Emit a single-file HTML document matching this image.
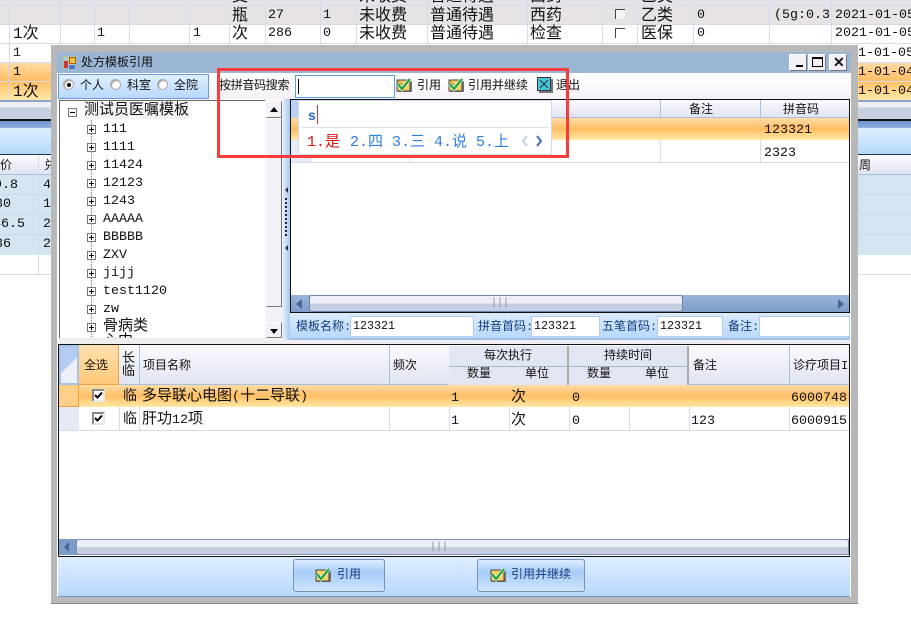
<!DOCTYPE html>
<html><head><meta charset="utf-8">
<style>
*{box-sizing:border-box}
html,body{margin:0;padding:0;width:911px;height:621px;overflow:hidden;background:#fff}
body{position:relative;font-family:"Liberation Mono","WenQuanYi Zen Hei","Noto Sans CJK SC",monospace;font-size:13.33px;color:#111}
div,span.a{position:absolute}
.t{position:absolute;white-space:nowrap;line-height:16px}
.s{font-size:12px}
.f{font-size:16px}
.m{font-size:15px}
.vl{position:absolute;width:1px;background:#d5daee}
.hl{position:absolute;height:1px;background:#d5daee}
.org{background:linear-gradient(#ffdca8,#ffbe62 50%,#ffe9a8)}
.hdr{background:linear-gradient(#fbfbfe,#e1e4f2)}
.exp{position:absolute;width:9px;height:9px;border:1px solid #777;background:#fff}
.exp:before{content:"";position:absolute;left:1px;top:3px;width:5px;height:1px;background:#000}
.exp.p:after{content:"";position:absolute;left:3px;top:1px;width:1px;height:5px;background:#000}
.cb{position:absolute;width:13px;height:13px;border:2px solid #888;border-right-color:#e8e8e8;border-bottom-color:#e8e8e8;background:#fff}
.btn3d{position:absolute;background:#f4f1f6;border:1px solid;border-color:#fff #777 #777 #fff}
.rad{position:absolute;width:11px;height:11px;border-radius:50%;background:#fff;border:1px solid #aaa;box-shadow:inset 1px 1px 1px #999}
.lb{color:#143c7c}
.in{font:11.67px/16px "Liberation Mono",monospace}
</style></head><body>

<!-- background table -->
<div style="left:0;top:0;width:911px;height:24px;background:#e6e2e6"></div>
<div class="org" style="left:0;top:62px;width:911px;height:38px"></div>
<div style="left:0;top:100px;width:911px;height:2px;background:#8fa4c8"></div>
<div style="left:0;top:102px;width:911px;height:17px;background:linear-gradient(#eeeef6 30%,#c4cede 35%,#c8d2e2)"></div>
<div style="left:0;top:119px;width:911px;height:2px;background:#111"></div>
<div style="left:0;top:121px;width:911px;height:7px;background:linear-gradient(#6d93d0,#8fb0e0)"></div>
<div style="left:0;top:128px;width:911px;height:26px;background:linear-gradient(#dfefff,#b6d8fb)"></div>
<div style="left:0;top:154px;width:911px;height:21px;background:linear-gradient(#fcfcff,#e0e3f1);border-top:1px solid #234;border-bottom:1px solid #a8c0dc"></div>
<div style="left:0;top:175px;width:911px;height:80px;background:#d3e5f1"></div>
<div class="hl" style="left:0;top:274px;width:911px"></div>
<div class="hl" style="left:0;top:194px;width:911px;background:#c8dbea"></div>
<div class="hl" style="left:0;top:214px;width:911px;background:#c8dbea"></div>
<div class="hl" style="left:0;top:234px;width:911px;background:#c8dbea"></div>
<div class="hl" style="left:0;top:5px;width:911px"></div>
<div class="hl" style="left:0;top:24px;width:911px"></div>
<div class="hl" style="left:0;top:43px;width:911px"></div>
<div class="hl" style="left:0;top:62px;width:911px"></div>
<div class="hl" style="left:0;top:81px;width:911px"></div>
<div class="vl" style="left:9px;top:0;height:100px"></div>
<div class="vl" style="left:60px;top:0;height:44px"></div>
<div class="vl" style="left:94px;top:0;height:44px"></div>
<div class="vl" style="left:129px;top:0;height:44px"></div>
<div class="vl" style="left:189px;top:0;height:44px"></div>
<div class="vl" style="left:229px;top:0;height:44px"></div>
<div class="vl" style="left:265px;top:0;height:44px"></div>
<div class="vl" style="left:320px;top:0;height:44px"></div>
<div class="vl" style="left:356px;top:0;height:44px"></div>
<div class="vl" style="left:427px;top:0;height:44px"></div>
<div class="vl" style="left:527px;top:0;height:44px"></div>
<div class="vl" style="left:602px;top:0;height:44px"></div>
<div class="vl" style="left:637px;top:0;height:44px"></div>
<div class="vl" style="left:693px;top:0;height:44px"></div>
<div class="vl" style="left:769px;top:0;height:44px"></div>
<div class="vl" style="left:831px;top:0;height:44px"></div>
<div class="vl" style="left:38px;top:155px;height:120px"></div>

<!-- clipped top row -->
<span class="t f" style="left:232px;top:-11px">支</span>
<span class="t" style="left:268px;top:-11px">2.544</span>
<span class="t" style="left:323px;top:-11px">1</span>
<span class="t f" style="left:359px;top:-11px">未收费</span>
<span class="t f" style="left:430px;top:-11px">普通待遇</span>
<span class="t f" style="left:530px;top:-11px">西药</span>
<span class="t f" style="left:641px;top:-11px">乙类</span>
<span class="t" style="left:697px;top:-11px">1</span>
<span class="t" style="left:774px;top:-11px">24:2.4:1</span>
<span class="t" style="left:835px;top:-11px">2021-01-05</span>

<span class="t f" style="left:232px;top:8px">瓶</span>
<span class="t" style="left:268px;top:8px">27</span>
<span class="t" style="left:323px;top:8px">1</span>
<span class="t f" style="left:359px;top:8px">未收费</span>
<span class="t f" style="left:430px;top:8px">普通待遇</span>
<span class="t f" style="left:530px;top:8px">西药</span>
<span class="t f" style="left:641px;top:8px">乙类</span>
<span class="t" style="left:697px;top:8px">0</span>
<span class="t" style="left:774px;top:8px;width:58px;overflow:hidden">(5g:0.3;</span>
<span class="t" style="left:835px;top:8px">2021-01-05</span>
<div style="left:615px;top:9px;width:10px;height:10px;border-left:1px solid #444;border-top:1px solid #444;background:#f6f4f6"></div>

<span class="t f" style="left:13px;top:26px">1次</span>
<span class="t" style="left:97px;top:26px">1</span>
<span class="t" style="left:193px;top:26px">1</span>
<span class="t f" style="left:232px;top:26px">次</span>
<span class="t" style="left:268px;top:26px">286</span>
<span class="t" style="left:323px;top:26px">0</span>
<span class="t f" style="left:359px;top:26px">未收费</span>
<span class="t f" style="left:430px;top:26px">普通待遇</span>
<span class="t f" style="left:530px;top:26px">检查</span>
<span class="t f" style="left:641px;top:26px">医保</span>
<span class="t" style="left:697px;top:26px">0</span>
<span class="t" style="left:835px;top:26px">2021-01-05</span>
<div style="left:615px;top:28px;width:10px;height:10px;border-left:1px solid #444;border-top:1px solid #444"></div>

<span class="t" style="left:13px;top:46px">1</span>
<span class="t" style="left:13px;top:65px">1</span>
<span class="t f" style="left:13px;top:84px">1次</span>
<span class="t s" style="left:0;top:158px">价</span>
<span class="t s" style="left:44px;top:158px">兑</span>
<span class="t" style="left:-6px;top:178px">9.8</span>
<span class="t" style="left:43px;top:178px">4</span>
<span class="t" style="left:-5px;top:197px">30</span>
<span class="t" style="left:43px;top:197px">1</span>
<span class="t" style="left:-7px;top:217px">46.5</span>
<span class="t" style="left:43px;top:217px">2</span>
<span class="t" style="left:-5px;top:237px">36</span>
<span class="t" style="left:43px;top:237px">2</span>
<span class="t s" style="left:859px;top:158px">周</span>
<span class="t" style="left:858px;top:46px">1-01-05</span>
<span class="t" style="left:858px;top:65px">1-01-04</span>
<span class="t" style="left:858px;top:84px">1-01-04</span>

<!-- window -->
<div style="left:51px;top:45px;width:807px;height:559px;background:#b8b8b8;border-bottom:1px solid #888"></div>
<div style="left:57px;top:52px;width:794px;height:545px;background:#fff"></div>
<div style="left:57px;top:52px;width:794px;height:21px;background:#9ab6d4"></div>
<div style="left:63px;top:56px;width:13px;height:13px;border:1px dotted #ab8;background:#b8c8c8"></div>
<div style="left:69px;top:57px;width:7px;height:7px;background:#f2c23c;border:1px solid #a60"></div>
<div style="left:64px;top:61px;width:4px;height:7px;background:#c33"></div>
<div style="left:69px;top:65px;width:6px;height:4px;background:#4a78d0"></div>
<span class="t s" style="left:81px;top:55px;color:#111">处方模板引用</span>
<div class="btn3d" style="left:789px;top:54px;width:18px;height:17px"><div style="left:6px;top:10px;width:7px;height:2px;background:#000"></div></div>
<div class="btn3d" style="left:808px;top:54px;width:18px;height:17px"><div style="left:3px;top:2px;width:11px;height:10px;border:1px solid #000;border-top-width:2px"></div></div>
<div class="btn3d" style="left:829px;top:54px;width:18px;height:17px"><span class="t" style="left:3px;top:0;font:bold 14px/15px 'Liberation Sans',sans-serif">✕</span></div>

<!-- toolbar -->
<div style="left:57px;top:73px;width:793px;height:26px;background:linear-gradient(#fff,#f5f1f8)"></div>
<div style="left:58px;top:74px;width:151px;height:25px;background:linear-gradient(#e0eeff,#b8d8fc);border:1px solid #6a9ad8"></div>
<div class="rad" style="left:63px;top:79px"><div style="left:3px;top:3px;width:4px;height:4px;border-radius:50%;background:#000"></div></div>
<span class="t s" style="left:80px;top:78px">个人</span>
<div class="rad" style="left:110px;top:79px"></div>
<span class="t s" style="left:127px;top:78px">科室</span>
<div class="rad" style="left:157px;top:79px"></div>
<span class="t s" style="left:174px;top:78px">全院</span>
<span class="t s" style="left:219px;top:78px;letter-spacing:-.3px">按拼音码搜索</span>
<div style="left:295px;top:75px;width:100px;height:23px;background:#fff;border:1px solid #5a9ede"></div>
<div style="left:298px;top:79px;width:1px;height:15px;background:#000"></div>

<svg style="position:absolute;left:396px;top:77px" width="17" height="16" viewBox="0 0 17 16"><rect x="2" y="4" width="14" height="11" rx="1" fill="#777"/><rect x="1" y="3" width="13" height="11" fill="#f6cf5c" stroke="#444"/><path d="M2 4l6 5 6-5" fill="none" stroke="#b88a20"/><path d="M2 7l4 5 8-10" fill="none" stroke="#fff" stroke-width="3.6"/><path d="M2 7l4 5 8-10" fill="none" stroke="#27a53f" stroke-width="2.4"/></svg>
<span class="t s" style="left:417px;top:78px">引用</span>
<svg style="position:absolute;left:448px;top:77px" width="17" height="16" viewBox="0 0 17 16"><rect x="2" y="4" width="14" height="11" rx="1" fill="#777"/><rect x="1" y="3" width="13" height="11" fill="#f6cf5c" stroke="#444"/><path d="M2 4l6 5 6-5" fill="none" stroke="#b88a20"/><path d="M2 7l4 5 8-10" fill="none" stroke="#fff" stroke-width="3.6"/><path d="M2 7l4 5 8-10" fill="none" stroke="#27a53f" stroke-width="2.4"/></svg>
<span class="t s" style="left:468px;top:78px">引用并继续</span>
<svg style="position:absolute;left:537px;top:77px" width="16" height="16" viewBox="0 0 16 16"><rect x="2" y="2" width="14" height="14" fill="#777"/><rect x=".5" y=".5" width="13" height="13" fill="#48c8d0" stroke="#334"/><path d="M3 3l8 8M11 3l-8 8" stroke="#235" stroke-width="1.1"/></svg>
<span class="t s" style="left:556px;top:78px">退出</span>

<!-- tree -->
<div style="left:59px;top:100px;width:224px;height:240px;background:#fff;border:1px solid #666;border-right:none;border-bottom:none;overflow:hidden">
  <div style="left:31px;top:10px;width:0;height:240px;border-left:1px dotted #777"></div>
  <div class="exp" style="left:8px;top:7px"></div>
  <span class="t m" style="left:24px;top:2px;background:#f6f1f6">测试员医嘱模板</span>
  <div class="exp p" style="left:27px;top:24px"></div><span class="t" style="left:43px;top:21px">111</span>
  <div class="exp p" style="left:27px;top:42px"></div><span class="t" style="left:43px;top:39px">1111</span>
  <div class="exp p" style="left:27px;top:60px"></div><span class="t" style="left:43px;top:57px">11424</span>
  <div class="exp p" style="left:27px;top:78px"></div><span class="t" style="left:43px;top:75px">12123</span>
  <div class="exp p" style="left:27px;top:96px"></div><span class="t" style="left:43px;top:93px">1243</span>
  <div class="exp p" style="left:27px;top:114px"></div><span class="t" style="left:43px;top:111px">AAAAA</span>
  <div class="exp p" style="left:27px;top:132px"></div><span class="t" style="left:43px;top:129px">BBBBB</span>
  <div class="exp p" style="left:27px;top:150px"></div><span class="t" style="left:43px;top:147px">ZXV</span>
  <div class="exp p" style="left:27px;top:168px"></div><span class="t" style="left:43px;top:165px">jijj</span>
  <div class="exp p" style="left:27px;top:186px"></div><span class="t" style="left:43px;top:183px">test1120</span>
  <div class="exp p" style="left:27px;top:204px"></div><span class="t" style="left:43px;top:201px">zw</span>
  <div class="exp p" style="left:27px;top:222px"></div><span class="t m" style="left:43px;top:218px">骨病类</span>
  <span class="t m" style="left:43px;top:233px">心内</span>
</div>
<div style="left:59px;top:338px;width:224px;height:2px;background:#eeecf0"></div>
<div style="left:265px;top:100px;width:18px;height:240px;background:#f4f1f6"></div>
<div class="btn3d" style="left:266px;top:101px;width:16px;height:17px"><div style="left:3px;top:5px;border:4px solid transparent;border-bottom:5px solid #000;border-top:none"></div></div>
<div class="btn3d" style="left:266px;top:118px;width:16px;height:189px"></div>
<div class="btn3d" style="left:266px;top:322px;width:16px;height:16px"><div style="left:3px;top:6px;border:4px solid transparent;border-top:5px solid #000;border-bottom:none"></div></div>

<!-- splitter -->
<div style="left:283px;top:99px;width:7px;height:241px;background:linear-gradient(90deg,#e0eeff,#a8c8f0)"></div>
<div style="left:285px;top:198px;width:2px;height:38px;border-left:2px dotted #223"></div>
<div style="left:285px;top:187px;border:3px solid transparent;border-right:3px solid #234;border-left:none"></div>
<div style="left:285px;top:245px;border:3px solid transparent;border-right:3px solid #234;border-left:none"></div>

<!-- right grid -->
<div style="left:290px;top:99px;width:560px;height:214px;background:#fff;border:1px solid #111;overflow:hidden">
  <div class="hdr" style="left:0;top:0;width:560px;height:18px;border-bottom:1px solid #a8c0dc"></div>
  <div style="left:0;top:0;width:16px;height:18px;background:#b8cff0"></div>
  <div class="org" style="left:0;top:18px;width:560px;height:22px"></div>
  <div style="left:0;top:40px;width:20px;height:23px;background:#e6e9f6;border-right:1px solid #d5daee"></div>
  <div class="hl" style="left:0;top:62px;width:560px"></div>
  <div class="vl" style="left:369px;top:0;height:18px;background:#a8c0dc"></div>
  <div class="vl" style="left:469px;top:0;height:18px;background:#a8c0dc"></div>
  <div class="vl" style="left:119px;top:40px;height:23px"></div>
  <div class="vl" style="left:369px;top:40px;height:23px"></div>
  <div class="vl" style="left:469px;top:40px;height:23px"></div>
  <span class="t s" style="left:398px;top:2px">备注</span>
  <span class="t s" style="left:492px;top:2px">拼音码</span>
  <span class="t" style="left:473px;top:23px">123321</span>
  <span class="t" style="left:473px;top:46px">2323</span>
  <div style="left:0;top:195px;width:558px;height:17px;background:linear-gradient(#9cb4da,#7c9cc8)"></div>
  <div style="left:5px;top:199px;border:5px solid transparent;border-right:6px solid #4e6490;border-left:none"></div>
  <div style="left:18px;top:195px;width:374px;height:17px;background:linear-gradient(#eeeef6 45%,#c4cede 55%);border:1px solid #6a82ac;border-radius:3px"></div>
  <span class="t" style="left:200px;top:196px;font-size:10px;color:#889">|||</span>
  <div style="left:547px;top:199px;border:5px solid transparent;border-left:6px solid #4e6490;border-right:none"></div>
</div>

<!-- form panel -->
<div style="left:290px;top:313px;width:560px;height:27px;background:linear-gradient(#dcecff,#b8d8fc);border-bottom:2px solid #9cc0e8"></div>
<span class="t s lb" style="left:296px;top:319px">模板名称:</span>
<div style="left:350px;top:316px;width:124px;height:21px;background:#fff;border:1px solid #b4cce4"></div>
<span class="t in" style="left:353px;top:318px">123321</span>
<span class="t s lb" style="left:478px;top:319px">拼音首码:</span>
<div style="left:531px;top:316px;width:69px;height:21px;background:#fff;border:1px solid #b4cce4"></div>
<span class="t in" style="left:534px;top:318px">123321</span>
<span class="t s lb" style="left:602px;top:319px">五笔首码:</span>
<div style="left:657px;top:316px;width:66px;height:21px;background:#fff;border:1px solid #b4cce4"></div>
<span class="t in" style="left:660px;top:318px">123321</span>
<span class="t s lb" style="left:728px;top:319px">备注:</span>
<div style="left:759px;top:316px;width:91px;height:21px;background:#fff;border:1px solid #b4cce4"></div>

<!-- bottom grid -->
<div style="left:57px;top:340px;width:793px;height:4px;background:#f0eef2"></div>
<div style="left:58px;top:344px;width:792px;height:213px;background:#fff;border:1px solid #111;overflow:hidden">
  <div class="hdr" style="left:0;top:0;width:792px;height:40px;border-bottom:1px solid #a8c0dc"></div>
  <div style="left:0;top:0;width:20px;height:40px;background:linear-gradient(135deg,#b4ccf0 50%,#eceef8 50%);border:2px solid #a4c2ea"></div>
  <div style="left:20px;top:0;width:40px;height:40px;background:linear-gradient(#ffe0b0,#ffc878);border-right:1px solid #f0a040;border-bottom:1px solid #f0a040"></div>
  <div class="vl" style="left:80px;top:0;height:40px;background:#a8c0dc"></div>
  <div class="vl" style="left:330px;top:0;height:40px;background:#a8c0dc"></div>
  <div class="vl" style="left:730px;top:0;height:40px;background:#a8c0dc"></div>
  <span class="t s" style="left:25px;top:13px">全选</span>
  <span class="t" style="left:63px;top:6px;font-size:13px">长</span>
  <span class="t" style="left:63px;top:19px;font-size:13px">临</span>
  <span class="t s" style="left:84px;top:13px">项目名称</span>
  <span class="t s" style="left:334px;top:13px">频次</span>
  <div style="left:390px;top:1px;width:120px;height:39px;background:#e2e6f2;border-right:2px solid #aaa"></div>
  <div style="left:510px;top:1px;width:120px;height:39px;background:#e2e6f2;border-right:2px solid #aaa"></div>
  <div class="hl" style="left:390px;top:21px;width:240px;background:#aab4c8"></div>
  <span class="t s" style="left:425px;top:3px">每次执行</span>
  <span class="t s" style="left:545px;top:3px">持续时间</span>
  <span class="t s" style="left:408px;top:21px">数量</span>
  <span class="t s" style="left:466px;top:21px">单位</span>
  <span class="t s" style="left:528px;top:21px">数量</span>
  <span class="t s" style="left:586px;top:21px">单位</span>
  <span class="t s" style="left:634px;top:13px">备注</span>
  <span class="t s" style="left:734px;top:13px;width:58px;overflow:hidden">诊疗项目ID</span>

  <div class="org" style="left:0;top:40px;width:792px;height:22px"></div>
  <div style="left:0;top:40px;width:20px;height:22px;background:#ffcf88;border-right:1px solid #f0a040;border-bottom:1px solid #f0a040"></div>
  <div style="left:0;top:62px;width:20px;height:24px;background:#e6e9f6"></div>
  <div class="hl" style="left:0;top:85px;width:792px"></div>
  <div class="vl" style="left:60px;top:62px;height:24px"></div>
  <div class="vl" style="left:80px;top:62px;height:24px"></div>
  <div class="vl" style="left:330px;top:62px;height:24px"></div>
  <div class="vl" style="left:390px;top:62px;height:24px"></div>
  <div class="vl" style="left:450px;top:62px;height:24px"></div>
  <div class="vl" style="left:510px;top:62px;height:24px"></div>
  <div class="vl" style="left:570px;top:62px;height:24px"></div>
  <div class="vl" style="left:630px;top:62px;height:24px"></div>
  <div class="vl" style="left:730px;top:62px;height:24px"></div>
  <div class="cb" style="left:33px;top:44px"><svg style="position:absolute;left:0;top:0" width="9" height="9" viewBox="0 0 9 9"><path d="M1 4l2.5 2.5L8 1.5" fill="none" stroke="#000" stroke-width="2"/></svg></div>
  <div class="cb" style="left:33px;top:67px"><svg style="position:absolute;left:0;top:0" width="9" height="9" viewBox="0 0 9 9"><path d="M1 4l2.5 2.5L8 1.5" fill="none" stroke="#000" stroke-width="2"/></svg></div>
  <span class="t" style="left:64px;top:44px;font-size:14px">临</span>
  <span class="t m" style="left:83px;top:44px">多导联心电图<span style="font-size:13.33px">(</span>十二导联<span style="font-size:13.33px">)</span></span>
  <span class="t" style="left:392px;top:46px">1</span>
  <span class="t m" style="left:452px;top:45px">次</span>
  <span class="t" style="left:513px;top:46px">0</span>
  <span class="t" style="left:732px;top:46px">6000748</span>
  <span class="t" style="left:64px;top:67px;font-size:14px">临</span>
  <span class="t m" style="left:83px;top:67px">肝功<span style="font-size:13.33px">12</span>项</span>
  <span class="t" style="left:392px;top:69px">1</span>
  <span class="t m" style="left:452px;top:68px">次</span>
  <span class="t" style="left:513px;top:69px">0</span>
  <span class="t" style="left:632px;top:69px">123</span>
  <span class="t" style="left:732px;top:69px">6000915</span>

  <div style="left:0;top:194px;width:790px;height:16px;background:#7c9cc8"></div>
  <div style="left:5px;top:197px;border:5px solid transparent;border-right:5px solid #4e6490;border-left:none"></div>
  <div style="left:17px;top:194px;width:773px;height:16px;background:linear-gradient(#eeeef6 45%,#c4cede 55%);border:1px solid #7c90b4;border-radius:3px"></div>
  <span class="t" style="left:371px;top:195px;font-size:10px;color:#889">|||</span>
</div>

<!-- bottom panel -->
<div style="left:58px;top:557px;width:792px;height:40px;background:linear-gradient(#dfeeff,#b8d8fc);border-bottom:1px solid #7098c8"></div>
<div style="left:293px;top:559px;width:92px;height:33px;background:linear-gradient(#dcecff,#a8cdf8 40%,#cfe4fc);border:1px solid #7890b4;border-radius:3px"></div>
<svg style="position:absolute;left:315px;top:567px" width="17" height="16" viewBox="0 0 17 16"><rect x="2" y="4" width="14" height="11" rx="1" fill="#777"/><rect x="1" y="3" width="13" height="11" fill="#f6cf5c" stroke="#444"/><path d="M2 7l4 5 8-10" fill="none" stroke="#fff" stroke-width="3.6"/><path d="M2 7l4 5 8-10" fill="none" stroke="#27a53f" stroke-width="2.4"/></svg>
<span class="t s lb" style="left:337px;top:567px">引用</span>
<div style="left:477px;top:559px;width:108px;height:33px;background:linear-gradient(#dcecff,#a8cdf8 40%,#cfe4fc);border:1px solid #7890b4;border-radius:3px"></div>
<svg style="position:absolute;left:490px;top:567px" width="17" height="16" viewBox="0 0 17 16"><rect x="2" y="4" width="14" height="11" rx="1" fill="#777"/><rect x="1" y="3" width="13" height="11" fill="#f6cf5c" stroke="#444"/><path d="M2 7l4 5 8-10" fill="none" stroke="#fff" stroke-width="3.6"/><path d="M2 7l4 5 8-10" fill="none" stroke="#27a53f" stroke-width="2.4"/></svg>
<span class="t s lb" style="left:511px;top:567px">引用并继续</span>

<!-- IME popup -->
<div style="left:298px;top:100px;width:254px;height:55px;background:#fff;border:1px solid #d4d8ec"></div>
<div class="hl" style="left:301px;top:127px;width:248px;background:#e0e0ea"></div>
<span class="t" style="left:308px;top:107px;font:bold 14px/16px 'Liberation Sans',sans-serif;color:#2a66c8">s</span>
<div style="left:317px;top:105px;width:1px;height:19px;background:#d33"></div>
<span class="t" style="left:307px;top:135px;color:#e01010;font-size:15px">1.是</span>
<span class="t" style="left:350px;top:135px;color:#2a7ee0;font-size:15px">2.四</span>
<span class="t" style="left:392px;top:135px;color:#2a7ee0;font-size:15px">3.三</span>
<span class="t" style="left:434px;top:135px;color:#2a7ee0;font-size:15px">4.说</span>
<span class="t" style="left:476px;top:135px;color:#2a7ee0;font-size:15px">5.上</span>
<svg style="position:absolute;left:520px;top:134px" width="26" height="14" viewBox="0 0 26 14"><path d="M7 2L3 7l4 5" fill="none" stroke="#c0d0e8" stroke-width="2"/><path d="M17 2l4 5-4 5" fill="none" stroke="#4a78b8" stroke-width="2.2"/></svg>

<!-- red rectangle -->
<div style="left:217px;top:68px;width:352px;height:90px;border:3px solid #f63c3c"></div>
</body></html>
